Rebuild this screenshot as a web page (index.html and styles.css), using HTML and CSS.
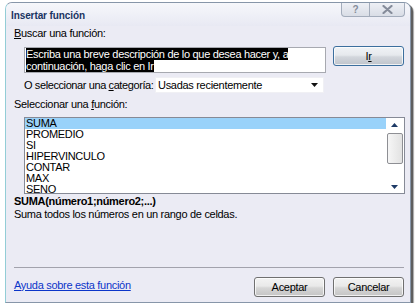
FILE: index.html
```html
<!DOCTYPE html>
<html lang="es">
<head>
<meta charset="utf-8">
<title>Insertar función</title>
<link rel="stylesheet" href="styles.css">
</head>
<body>
<div class="window">
  <div class="titlebar">
    <span class="title">Insertar función</span>
    <div class="caption-btns">
      <span class="cbtn help">?</span>
      <span class="cbtn close"><svg width="11" height="9" viewBox="0 0 11 9"><path d="M1.5 1 L9.5 8 M9.5 1 L1.5 8" stroke="#858c9a" stroke-width="2.2" stroke-linecap="round"/></svg></span>
    </div>
  </div>
  <div class="client">
    <div class="label"><u>B</u>uscar una función:</div>
    <div class="search-row">
      <div class="searchbox"><span class="selected-text">Escriba una breve descripción de lo que desea hacer y, a<br>continuación, haga clic en Ir</span></div>
      <div class="btn btn-default">I<u>r</u></div>
    </div>
    <div class="category-row">
      <span class="cat-label">O seleccionar una <u>c</u>ategoría:</span>
      <div class="select">
        <span>Usadas recientemente</span>
        <svg class="drop" width="7" height="4" viewBox="0 0 7 4"><path d="M0 0 H7 L3.5 4 Z" fill="#111"/></svg>
      </div>
    </div>
    <div class="label label-list">Seleccionar una <u>f</u>unción:</div>
    <div class="listbox">
      <ul class="items">
        <li class="item active">SUMA</li>
        <li class="item">PROMEDIO</li>
        <li class="item">SI</li>
        <li class="item">HIPERVINCULO</li>
        <li class="item">CONTAR</li>
        <li class="item">MAX</li>
        <li class="item">SENO</li>
      </ul>
      <div class="scrollbar">
        <svg class="arrow" width="7" height="4" viewBox="0 0 7 4"><path d="M0 4 H7 L3.5 0 Z" fill="#1d3a66"/></svg>
        <div class="thumb"></div>
        <svg class="arrow arrow-down" width="7" height="4" viewBox="0 0 7 4"><path d="M0 0 H7 L3.5 4 Z" fill="#1d3a66"/></svg>
      </div>
    </div>
    <div class="syntax">SUMA(número1;número2;...)</div>
    <div class="desc">Suma todos los números en un rango de celdas.</div>
    <div class="separator"></div>
    <div class="footer">
      <a class="help-link" href="#">Ayuda sobre esta función</a>
      <div class="footer-btns">
        <div class="btn">Aceptar</div>
        <div class="btn">Cancelar</div>
      </div>
    </div>
  </div>
</div>
</body>
</html>
```

FILE: styles.css
```css
* { box-sizing: border-box; }

body {
  margin: 0;
  background: #ffffff;
  font-family: "Liberation Sans", Arial, sans-serif;
  font-size: 11px;
  letter-spacing: -0.3px;
  color: #000;
}

u { text-decoration: underline; text-underline-offset: 1px; }

.window {
  margin: 2px 0 0 5px;
  width: 406px;
  height: 301px;
  border: 1px solid #8796a9;
  border-left-color: #93cdd6;
  border-radius: 7px 7px 0 0;
  background: #ebebf4;
  box-shadow: 2px 2px 0 #5e5e5e, 3px 3px 1px rgba(0, 0, 0, 0.35);
  display: flex;
  flex-direction: column;
  overflow: hidden;
}

.titlebar {
  height: 23px;
  flex: 0 0 auto;
  display: flex;
  align-items: flex-start;
  background: linear-gradient(#f6f7fb, #e8e9f3);
}

.title {
  margin: 6px 0 0 5px;
  line-height: 13px;
  font-weight: bold;
  font-size: 10px;
  letter-spacing: -0.1px;
  color: #1a3462;
}

.caption-btns {
  margin-left: auto;
  margin-right: 5px;
  display: flex;
  height: 14px;
  border: 1px solid #a3acbb;
  border-top: none;
  border-radius: 0 0 4px 4px;
  overflow: hidden;
  background: linear-gradient(#eef0f5, #d9dde6);
}

.cbtn {
  display: flex;
  align-items: center;
  justify-content: center;
  height: 100%;
}

.help {
  width: 28px;
  border-right: 1px solid #a3acbb;
  color: #858c9a;
  font-size: 10px;
  font-weight: bold;
}

.close { width: 34px; }

.client {
  flex: 1 1 auto;
  padding: 0 5px 0 8px;
  display: flex;
  flex-direction: column;
}

.label {
  line-height: 13px;
  margin-top: 1px;
  white-space: nowrap;
}

.label-list { margin-top: 5px; }

.search-row {
  margin: 6px 0 0 10px;
  display: flex;
  align-items: flex-start;
  gap: 7px;
}

.searchbox {
  margin-top: 1px;
  width: 302px;
  height: 26px;
  border: 1px solid #a7a9b0;
  background: #fff;
  padding: 0 0 0 1px;
  line-height: 12px;
  white-space: nowrap;
}

.selected-text {
  background: #000;
  color: #fff;
}

.btn {
  width: 71px;
  height: 20px;
  border: 1px solid #707070;
  border-radius: 3px;
  background: linear-gradient(#f3f3f3 0%, #e9e9e9 45%, #d6d6d6 55%, #c4c4c4 100%);
  box-shadow: inset 0 0 0 1px rgba(255, 255, 255, 0.75);
  display: flex;
  align-items: center;
  justify-content: center;
  line-height: 13px;
}

.btn-default {
  border-color: #3c6f9e;
  background: linear-gradient(#f0f3f6 0%, #e6e9ed 45%, #d2d6dc 55%, #bfc4cb 100%);
}

.category-row {
  margin: 4px 0 0 10px;
  display: flex;
  align-items: center;
}

.cat-label {
  flex: 0 0 131px;
  line-height: 13px;
  white-space: nowrap;
  letter-spacing: -0.4px;
}

.select {
  width: 169px;
  height: 16px;
  background: #fff;
  border: 1px solid #f0f0f4;
  display: flex;
  align-items: center;
  padding: 0 4px 0 2px;
  white-space: nowrap;
}

.drop { margin-left: auto; margin-right: 1px; }

.listbox {
  margin: 6px 0 0 10px;
  height: 77px;
  border: 1px solid #868a96;
  background: #fff;
  display: flex;
}

.items {
  list-style: none;
  margin: 0;
  padding: 0;
  flex: 1 1 auto;
}

.item {
  height: 11px;
  line-height: 11px;
  padding-left: 1px;
}

.item.active { background: #99d2fa; }

.scrollbar {
  flex: 0 0 18px;
  display: flex;
  flex-direction: column;
  align-items: center;
  padding: 5px 1px 4px 0;
}

.thumb {
  margin-top: 6px;
  width: 16px;
  height: 31px;
  border: 1px solid #8e8f94;
  border-radius: 2px;
  background: linear-gradient(90deg, #f6f6f6, #e2e2e2);
}

.arrow-down { margin-top: auto; }

.syntax {
  margin-top: 1px;
  line-height: 13px;
  font-weight: bold;
}

.desc { line-height: 13px; }

.separator {
  margin-top: 46px;
  height: 1px;
  background: #a2a2ac;
  margin-right: 1px;
}

.footer {
  margin-top: 9px;
  display: flex;
  align-items: center;
}

.help-link {
  color: #0b35c9;
  text-decoration: underline;
  line-height: 13px;
  margin-bottom: 4px;
}

.footer-btns {
  margin-left: auto;
  margin-right: 1px;
  display: flex;
  gap: 8px;
}
```
